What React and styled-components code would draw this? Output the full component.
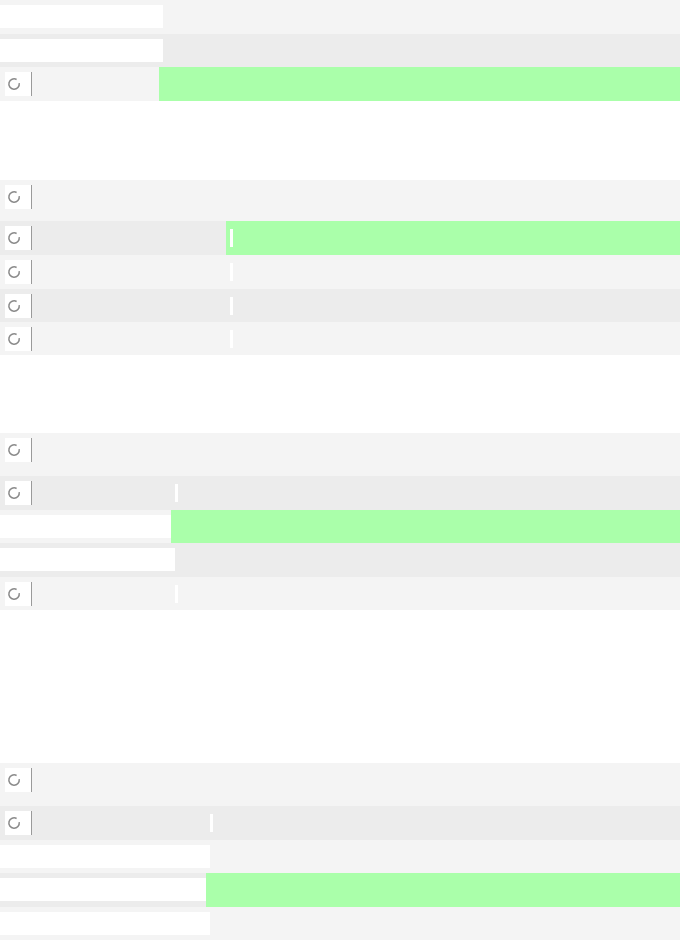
import React from "react";
import styled, { createGlobalStyle } from "styled-components";

const Global = createGlobalStyle`
  html, body { margin: 0; padding: 0; background: #ffffff; }
  body { font-family: "Liberation Sans", Arial, sans-serif; width: 680px; }
`;

const Page = styled.div`
  display: flex;
  flex-direction: column;
  width: 680px;
`;

const Table = styled.div`
  display: flex;
  flex-direction: column;
  margin-top: ${(p) => p.$gap}px;
`;

const Row = styled.div`
  display: flex;
  height: ${(p) => p.$h}px;
  background: ${(p) => (p.$alt ? "#ececec" : "#f4f4f4")};
`;

const LeftCell = styled.div`
  width: ${(p) => p.$w}px;
  flex: none;
  display: flex;
  align-items: flex-start;
  padding-top: 5px;
  box-sizing: border-box;
`;

const WhiteBox = styled.div`
  width: 100%;
  height: 23px;
  background: #ffffff;
`;

const IconBox = styled.div`
  display: flex;
  align-items: center;
  justify-content: flex-start;
  width: 27px;
  height: 24px;
  margin-left: 5px;
  padding-left: 2px;
  box-sizing: border-box;
  background: #ffffff;
  border-right: 1px solid #9a9a9a;
`;

const RightCell = styled.div`
  flex: 1;
  display: flex;
  align-items: center;
  background: ${(p) => (p.$sel ? "#aaffaa" : "transparent")};
  margin-left: ${(p) => (p.$sel ? "-4px" : "0")};
`;

const Handle = styled.div`
  width: 3px;
  height: 18px;
  background: #ffffff;
  margin-left: ${(p) => (p.$sel ? "4px" : "0")};
`;

const Loader = () => (
  <svg width="14" height="14" viewBox="0 0 14 14">
    <path d="M12.2 6.2A5.2 5.2 0 1 1 9.6 2.5" fill="none" stroke="#8a8a8a" strokeWidth="1.5" />
  </svg>
);

const groups = [
  {
    gap: 0,
    w: 163,
    handle: false,
    rows: [
      { h: 34, icon: false },
      { h: 33, icon: false, alt: true },
      { h: 34, icon: true, sel: true },
    ],
  },
  {
    gap: 79,
    w: 230,
    handle: true,
    rows: [
      { h: 41, icon: true, noHandle: true },
      { h: 34, icon: true, alt: true, sel: true },
      { h: 34, icon: true },
      { h: 33, icon: true, alt: true },
      { h: 33, icon: true },
    ],
  },
  {
    gap: 78,
    w: 175,
    handle: true,
    rows: [
      { h: 43, icon: true, noHandle: true },
      { h: 34, icon: true, alt: true },
      { h: 33, icon: false, sel: true, noHandle: true },
      { h: 34, icon: false, alt: true, noHandle: true },
      { h: 33, icon: true },
    ],
  },
  {
    gap: 153,
    w: 210,
    handle: true,
    rows: [
      { h: 43, icon: true, noHandle: true },
      { h: 34, icon: true, alt: true },
      { h: 33, icon: false, noHandle: true },
      { h: 34, icon: false, alt: true, sel: true, noHandle: true },
      { h: 33, icon: false, noHandle: true },
    ],
  },
];

export default function App() {
  return (
    <>
      <Global />
      <Page>
        {groups.map((g, gi) => (
          <Table key={gi} $gap={g.gap}>
            {g.rows.map((r, ri) => (
              <Row key={ri} $h={r.h} $alt={r.alt}>
                <LeftCell $w={g.w}>
                  {r.icon ? (
                    <IconBox>
                      <Loader />
                    </IconBox>
                  ) : (
                    <WhiteBox />
                  )}
                </LeftCell>
                <RightCell $sel={r.sel}>
                  {g.handle && !r.noHandle && <Handle $sel={r.sel} />}
                </RightCell>
              </Row>
            ))}
          </Table>
        ))}
      </Page>
    </>
  );
}
